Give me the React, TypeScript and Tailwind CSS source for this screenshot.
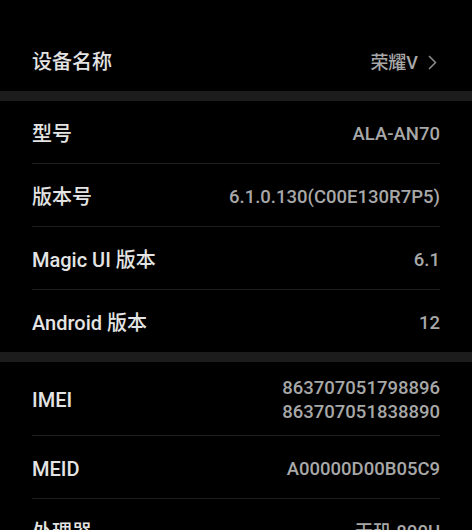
import React from 'react';

const font = { fontFamily: 'Roboto, "Noto Sans CJK SC", sans-serif' };

type Row = { label: string; value: React.ReactNode; tall?: boolean };

const Divider = () => <div className="mx-8 h-px bg-[#1e1e1e]" />;

const RowItem: React.FC<Row> = ({ label, value, tall }) => (
  <div className={`flex items-center justify-between px-8 ${tall ? 'h-[73px]' : 'h-[62px]'}`}>
    <span className="pt-[3px] text-[20px] font-medium text-[#e4e4e4]">{label}</span>
    <div className="pt-[3px] text-right text-[18.5px] font-medium leading-[24px] text-[#a8a8a8]">{value}</div>
  </div>
);

const Group: React.FC<{ rows: Row[] }> = ({ rows }) => (
  <div>
    {rows.map((r, i) => (
      <React.Fragment key={r.label}>
        {i > 0 && <Divider />}
        <RowItem {...r} />
      </React.Fragment>
    ))}
  </div>
);

export default function App() {
  return (
    <div className="h-[530px] w-[472px] overflow-hidden bg-black" style={font}>
      <div className="pt-[30px]">
        <div className="flex h-[61px] items-center justify-between px-8 pt-[3px]">
          <span className="text-[20px] font-medium text-[#e4e4e4]">设备名称</span>
          <div className="mr-[3px] flex items-center gap-[10px] text-[18px] font-medium text-[#a8a8a8]">
            <span>荣耀V</span>
            <svg width="9" height="15" viewBox="0 0 9 15" fill="none">
              <path d="M1 1l6.5 6.5L1 14" stroke="#8c8c8c" strokeWidth="1.5" />
            </svg>
          </div>
        </div>
      </div>
      <div className="h-[10px] bg-[#1c1c1c]" />
      <Group
        rows={[
          { label: '型号', value: 'ALA-AN70' },
          { label: '版本号', value: '6.1.0.130(C00E130R7P5)' },
          { label: 'Magic UI 版本', value: '6.1' },
          { label: 'Android 版本', value: '12' },
        ]}
      />
      <div className="h-[10px] bg-[#1c1c1c]" />
      <Group
        rows={[
          {
            label: 'IMEI',
            tall: true,
            value: (
              <>
                <div>863707051798896</div>
                <div>863707051838890</div>
              </>
            ),
          },
          { label: 'MEID', value: 'A00000D00B05C9' },
          { label: '处理器', value: '天玑 800U' },
        ]}
      />
    </div>
  );
}
